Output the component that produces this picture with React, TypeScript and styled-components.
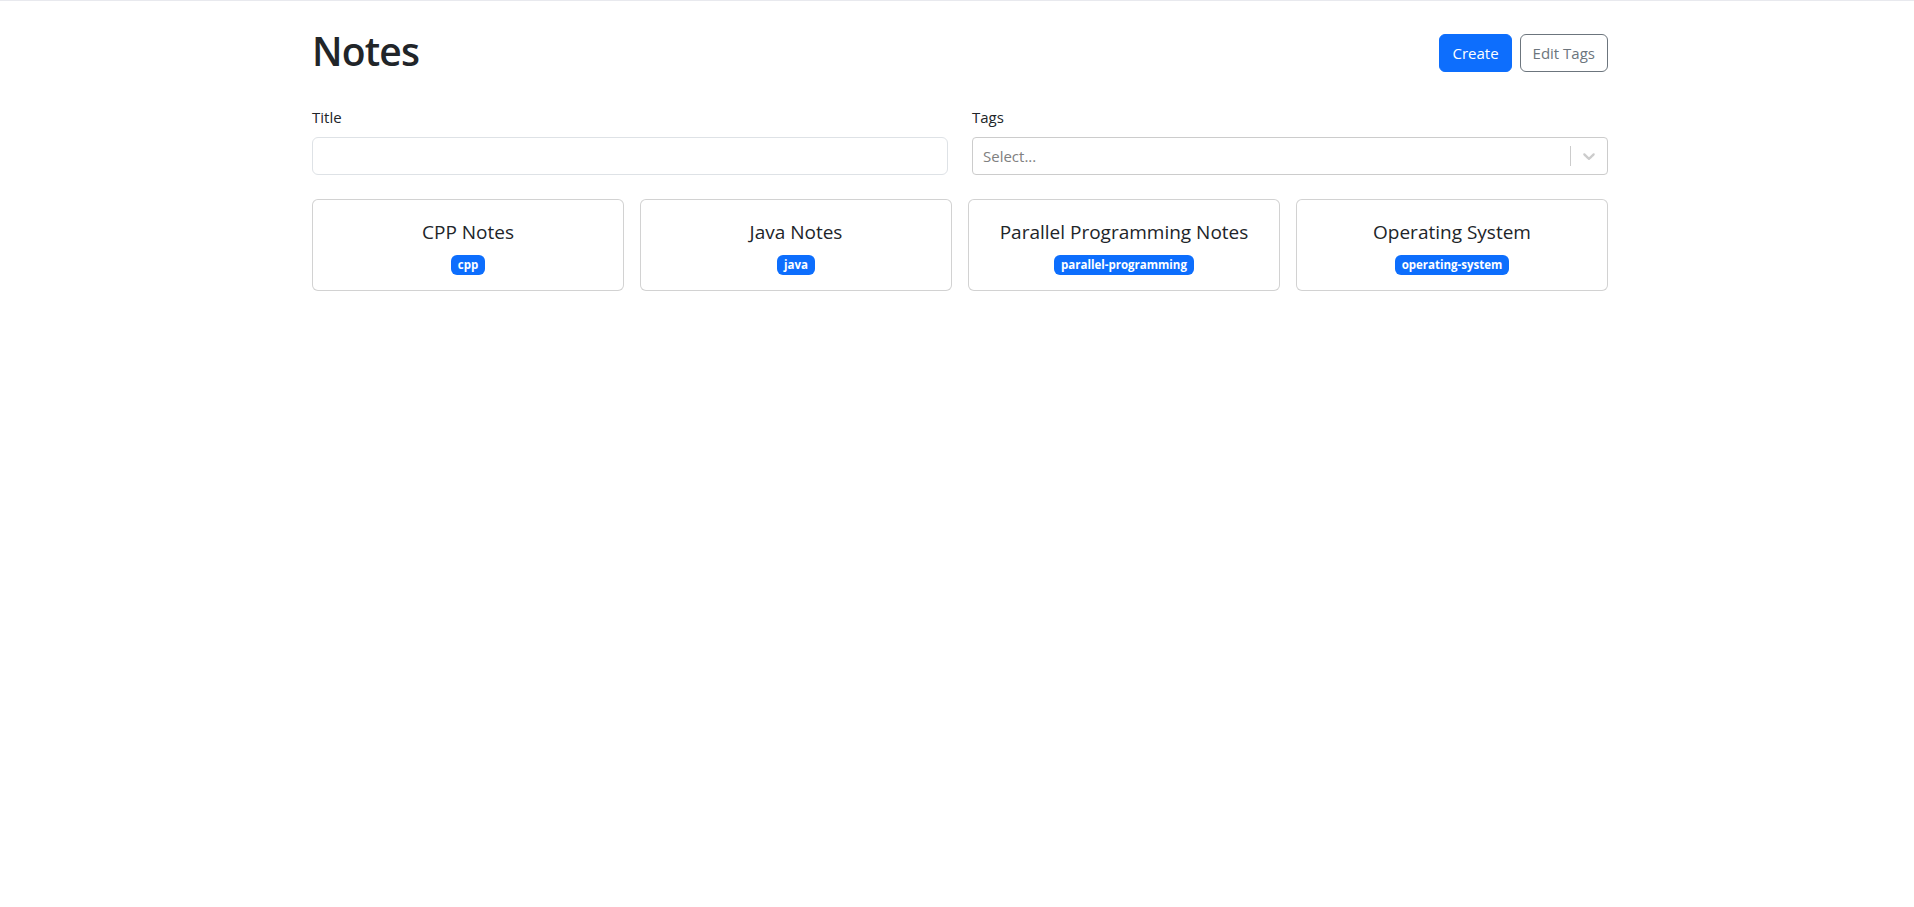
import styled, { createGlobalStyle } from 'styled-components';

type Note = { id: string; title: string; tags: string[] };

const notes: Note[] = [
  { id: '1', title: 'CPP Notes', tags: ['cpp'] },
  { id: '2', title: 'Java Notes', tags: ['java'] },
  { id: '3', title: 'Parallel Programming Notes', tags: ['parallel-programming'] },
  { id: '4', title: 'Operating System', tags: ['operating-system'] },
];

const App = () => {
  return (
    <>
      <GlobalStyle />
      <Container>
        <HeaderRow>
          <PageTitle>Notes</PageTitle>
          <ButtonStack>
            <Button>Create</Button>
            <Button $variant="outline">Edit Tags</Button>
          </ButtonStack>
        </HeaderRow>
        <FilterForm>
          <Field>
            <Label htmlFor="title">Title</Label>
            <TextInput id="title" type="text" />
          </Field>
          <Field>
            <Label>Tags</Label>
            <SelectControl>
              <Placeholder>Select...</Placeholder>
              <Indicators>
                <Separator />
                <DropdownIndicator>
                  <svg width="20" height="20" viewBox="0 0 20 20" aria-hidden="true">
                    <path
                      fill="currentColor"
                      d="M4.516 7.548c0.436-0.446 1.043-0.481 1.576 0l3.908 3.747 3.908-3.747c0.533-0.481 1.141-0.446 1.574 0 0.436 0.445 0.408 1.197 0 1.615-0.406 0.418-4.695 4.502-4.695 4.502-0.217 0.223-0.502 0.335-0.787 0.335s-0.57-0.112-0.789-0.335c0 0-4.287-4.084-4.695-4.502s-0.436-1.17 0-1.615z"
                    />
                  </svg>
                </DropdownIndicator>
              </Indicators>
            </SelectControl>
          </Field>
        </FilterForm>
        <NoteGrid>
          {notes.map((note) => (
            <NoteCard key={note.id}>
              <CardTitle>{note.title}</CardTitle>
              <TagList>
                {note.tags.map((tag) => (
                  <Badge key={tag}>{tag}</Badge>
                ))}
              </TagList>
            </NoteCard>
          ))}
        </NoteGrid>
      </Container>
    </>
  );
};

const GlobalStyle = createGlobalStyle`
  * {
    box-sizing: border-box;
  }
  body {
    margin: 0;
    border-top: 1px solid #e8e9ee;
    background: #fff;
    color: #212529;
    font-family: "Open Sans", "Noto Sans", "Liberation Sans", sans-serif;
    font-size: 16px;
    line-height: 1.5;
  }
`;

const Container = styled.div`
  max-width: 1320px;
  margin: 24px auto;
  padding: 0 9px 0 15px;
`;

const HeaderRow = styled.div`
  display: flex;
  align-items: center;
  justify-content: space-between;
  margin-bottom: 24px;
`;

const PageTitle = styled.h1`
  margin: 0 0 6px;
  padding-top: 2px;
  font-size: 39px;
  font-weight: 600;
  line-height: 48px;
  letter-spacing: -0.8px;
`;

const ButtonStack = styled.div`
  display: flex;
  gap: 8px;
`;

const Button = styled.button<{ $variant?: 'primary' | 'outline' }>`
  height: 38px;
  padding: 6px 12px;
  font-family: inherit;
  font-size: 15px;
  line-height: 1.5;
  border-radius: 6px;
  cursor: pointer;
  border: 1px solid ${(p) => (p.$variant === 'outline' ? '#6c757d' : '#0d6efd')};
  background: ${(p) => (p.$variant === 'outline' ? 'transparent' : '#0d6efd')};
  color: ${(p) => (p.$variant === 'outline' ? '#6c757d' : '#fff')};
`;

const FilterForm = styled.form`
  display: grid;
  grid-template-columns: 1fr 1fr;
  column-gap: 24px;
  margin-bottom: 24px;
`;

const Field = styled.div`
  display: flex;
  flex-direction: column;
`;

const Label = styled.label`
  margin-bottom: 8px;
  font-size: 15px;
  line-height: 24px;
`;

const TextInput = styled.input`
  height: 38px;
  padding: 6px 12px;
  font-family: inherit;
  font-size: 16px;
  border: 1px solid #dee2e6;
  border-radius: 6px;
  outline: none;
`;

const SelectControl = styled.div`
  display: flex;
  align-items: center;
  min-height: 38px;
  border: 1px solid #cccccc;
  border-radius: 4px;
`;

const Placeholder = styled.div`
  flex: 1;
  padding: 2px 10px;
  color: #808080;
  font-size: 15px;
`;

const Indicators = styled.div`
  display: flex;
  align-items: stretch;
  align-self: stretch;
`;

const Separator = styled.span`
  width: 1px;
  margin: 8px 0;
  background: #cccccc;
`;

const DropdownIndicator = styled.div`
  display: flex;
  align-items: center;
  padding: 8px;
  color: #cccccc;
`;

const NoteGrid = styled.div`
  display: grid;
  grid-template-columns: repeat(4, 1fr);
  gap: 16px;
`;

const NoteCard = styled.div`
  display: flex;
  flex-direction: column;
  align-items: center;
  justify-content: center;
  gap: 8px;
  padding: 17px 16px 15px;
  border: 1px solid rgba(0, 0, 0, 0.175);
  border-radius: 6px;
  background: #fff;
`;

const CardTitle = styled.span`
  font-size: 19px;
  line-height: 30px;
`;

const TagList = styled.div`
  display: flex;
  flex-wrap: wrap;
  justify-content: center;
  gap: 4px;
`;

const Badge = styled.span`
  display: inline-block;
  padding: 4px 7px;
  font-size: 11.5px;
  font-weight: 700;
  line-height: 12px;
  color: #fff;
  background: #0d6efd;
  border-radius: 6px;
  white-space: nowrap;
`;

export default App;
